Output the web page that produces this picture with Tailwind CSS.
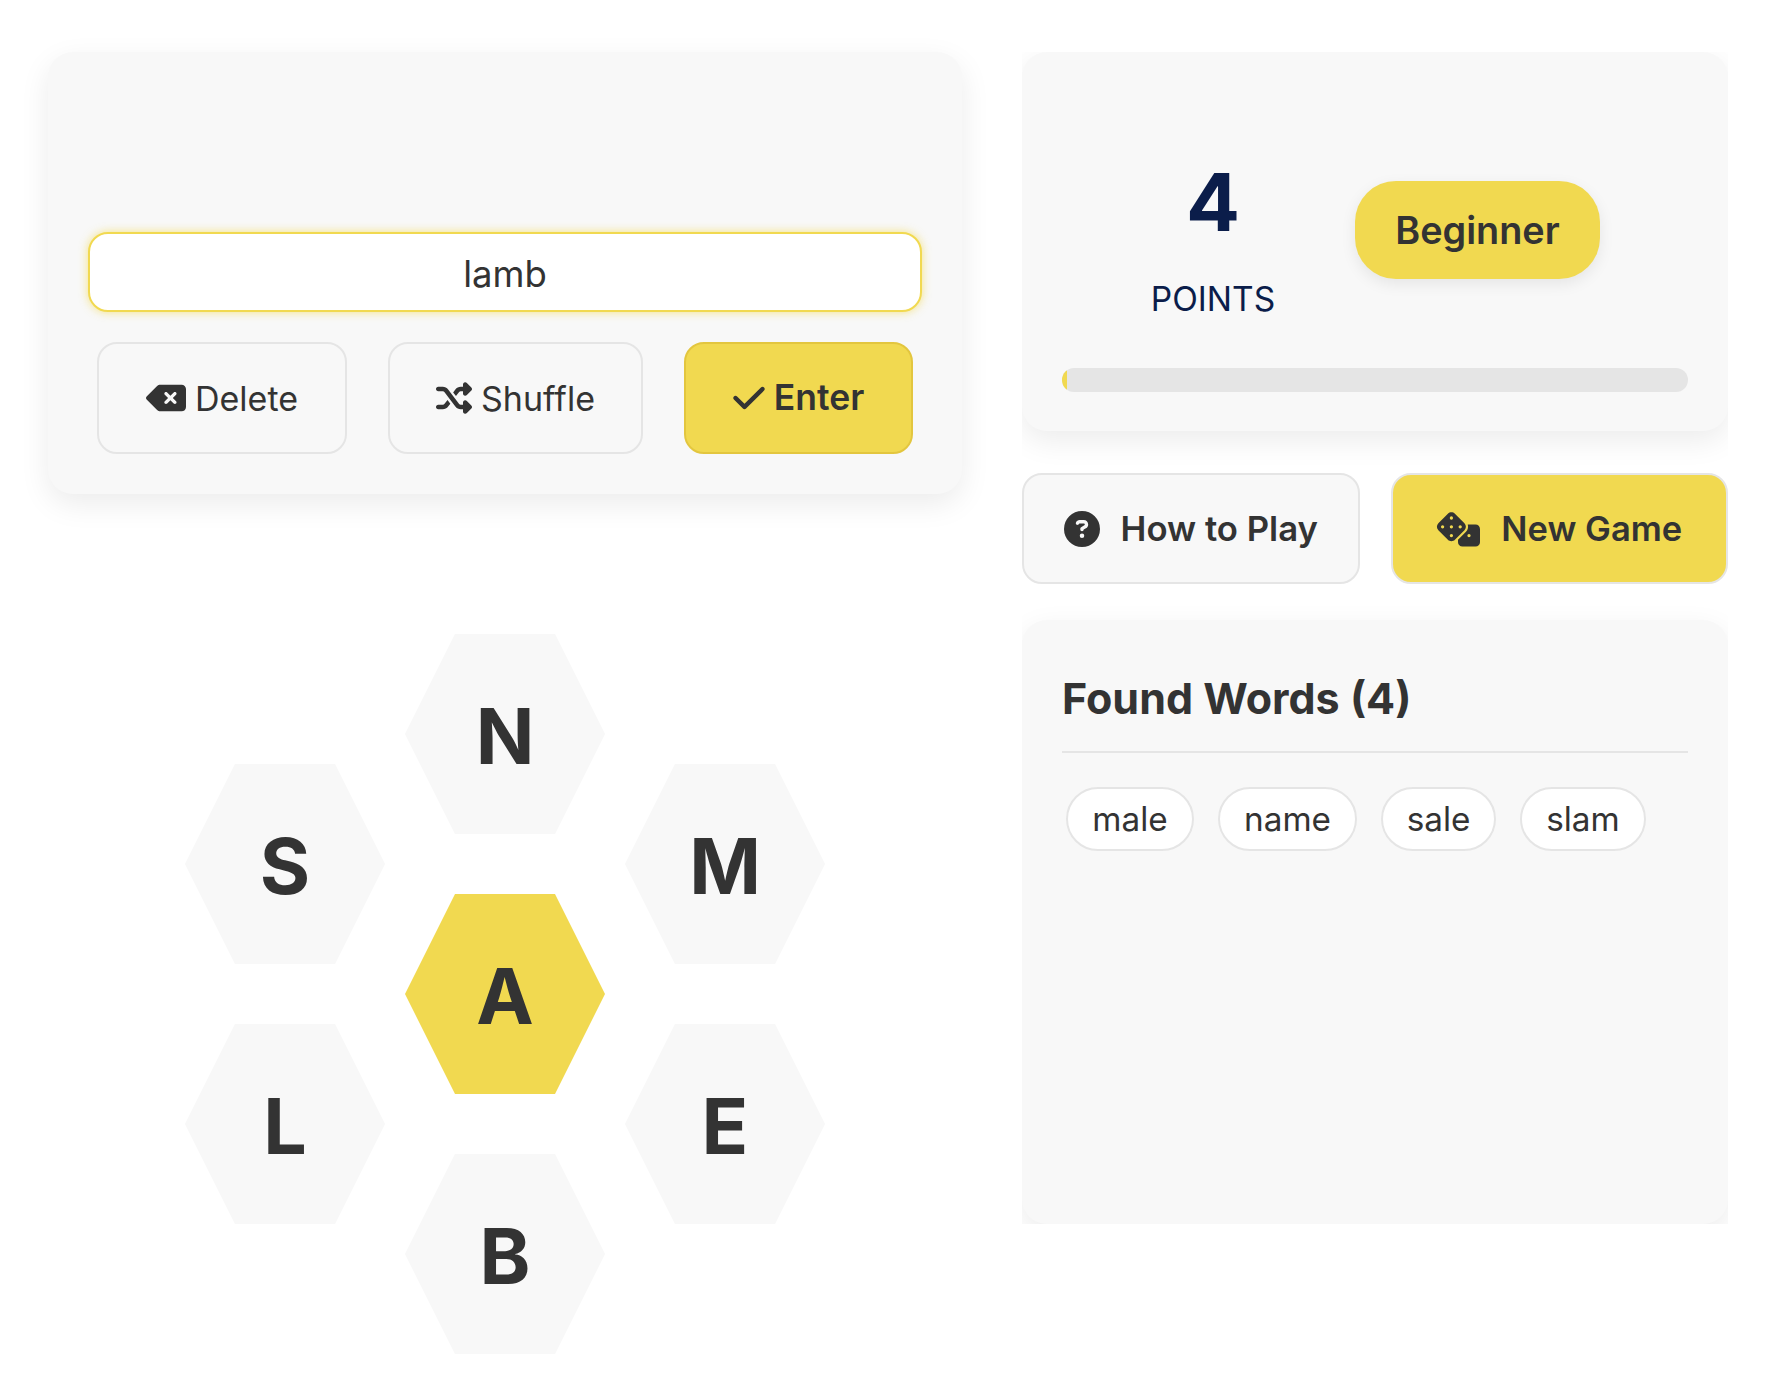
<!DOCTYPE html>
<html>
<head>
<meta charset="utf-8">
<script src="https://cdn.jsdelivr.net/npm/@tailwindcss/browser@4"></script>
</head>
<body class="bg-white font-['Inter',sans-serif] text-[#333333]">
<main class="flex items-start gap-[60px] px-[48px] pt-[52px] h-[1382px] overflow-hidden">
  <section class="w-[914px] shrink-0 flex flex-col">
    <div class="bg-[#f8f8f8] rounded-[25px] shadow-[0_10px_30px_rgba(0,0,0,0.08)] px-[40px] pb-[40px] pt-[180px] flex flex-col gap-[30px]">
      <div class="h-[80px] bg-white border-2 border-[#f1d950] rounded-[20px] shadow-[0_0_10px_rgba(242,217,78,0.7)] flex items-center justify-center text-[36.5px] leading-none pt-[4px]">lamb</div>
      <div class="flex justify-center gap-[41px]">
        <button class="h-[112px] w-[250px] flex items-center justify-center gap-[9px] border-2 border-[#e5e5e5] rounded-[20px] bg-[#f8f8f8] text-[34px]">
          <svg class="w-[40px] h-[36px] fill-[#333333]" viewBox="0 0 576 512"><path d="M576 128c0-35.3-28.7-64-64-64H205.3c-17 0-33.3 6.7-45.3 18.7L9.4 233.4c-6 6-9.4 14.1-9.4 22.6s3.4 16.6 9.4 22.6L160 429.3c12 12 28.3 18.7 45.3 18.7H512c35.3 0 64-28.7 64-64V128zM271 175c9.4-9.4 24.6-9.4 33.9 0l47 47 47-47c9.4-9.4 24.6-9.4 33.9 0s9.4 24.6 0 33.9l-47 47 47 47c9.4 9.4 9.4 24.6 0 33.9s-24.6 9.4-33.9 0l-47-47-47 47c-9.4 9.4-24.6 9.4-33.9 0s-9.4-24.6 0-33.9l47-47-47-47c-9.4-9.4-9.4-24.6 0-33.9z"/></svg>
          <span>Delete</span>
        </button>
        <button class="h-[112px] w-[255px] flex items-center justify-center gap-[9px] border-2 border-[#e5e5e5] rounded-[20px] bg-[#f8f8f8] text-[34px]">
          <svg class="w-[36px] h-[36px] fill-[#333333]" viewBox="0 0 512 512"><path d="M403.8 34.4c12-5 25.7-2.2 34.9 6.9l64 64c6 6 9.4 14.1 9.4 22.6s-3.4 16.6-9.4 22.6l-64 64c-9.2 9.2-22.9 11.9-34.9 6.9s-19.8-16.6-19.8-29.6V160H352c-10.1 0-19.6 4.7-25.6 12.8L284 229.3 244 176l31.2-41.6C293.3 110.2 321.8 96 352 96h32V64c0-12.9 7.8-24.6 19.8-29.6zM164 282.7L204 336l-31.2 41.6C154.7 401.8 126.2 416 96 416H32c-17.7 0-32-14.3-32-32s14.3-32 32-32H96c10.1 0 19.6-4.7 25.6-12.8L164 282.7zm274.6 188c-9.2 9.2-22.9 11.9-34.9 6.9s-19.8-16.6-19.8-29.6V416H352c-30.2 0-58.7-14.2-76.8-38.4L121.6 172.8c-6-8.1-15.5-12.8-25.6-12.8H32c-17.7 0-32-14.3-32-32s14.3-32 32-32H96c30.2 0 58.7 14.2 76.8 38.4L326.4 339.2c6 8.1 15.5 12.8 25.6 12.8h32V320c0-12.9 7.8-24.6 19.8-29.6s25.7-2.2 34.9 6.9l64 64c6 6 9.4 14.1 9.4 22.6s-3.4 16.6-9.4 22.6l-64 64z"/></svg>
          <span>Shuffle</span>
        </button>
        <button class="h-[112px] w-[229px] flex items-center justify-center gap-[9px] border-2 border-[#e3c63f] rounded-[20px] bg-[#f1d950] text-[35.5px] font-semibold">
          <svg class="w-[32px] h-[36px] fill-[#333333]" viewBox="0 0 448 512"><path d="M438.6 105.4c12.5 12.5 12.5 32.8 0 45.3l-256 256c-12.5 12.5-32.8 12.5-45.3 0l-128-128c-12.5-12.5-12.5-32.8 0-45.3s32.8-12.5 45.3 0L160 338.7 393.4 105.4c12.5-12.5 32.8-12.5 45.3 0z"/></svg>
          <span>Enter</span>
        </button>
      </div>
    </div>
    <div class="mt-[140px] flex justify-center gap-[20px] text-[77px] font-bold leading-none">
      <div class="flex flex-col justify-center gap-[60px]">
        <div class="w-[200px] h-[200px] pt-[4px] bg-[#f8f8f8] flex items-center justify-center [clip-path:polygon(25%_0,75%_0,100%_50%,75%_100%,25%_100%,0_50%)]">S</div>
        <div class="w-[200px] h-[200px] pt-[4px] bg-[#f8f8f8] flex items-center justify-center [clip-path:polygon(25%_0,75%_0,100%_50%,75%_100%,25%_100%,0_50%)]">L</div>
      </div>
      <div class="flex flex-col justify-center gap-[60px]">
        <div class="w-[200px] h-[200px] pt-[4px] bg-[#f8f8f8] flex items-center justify-center [clip-path:polygon(25%_0,75%_0,100%_50%,75%_100%,25%_100%,0_50%)]">N</div>
        <div class="w-[200px] h-[200px] pt-[4px] bg-[#f1d950] flex items-center justify-center [clip-path:polygon(25%_0,75%_0,100%_50%,75%_100%,25%_100%,0_50%)]">A</div>
        <div class="w-[200px] h-[200px] pt-[4px] bg-[#f8f8f8] flex items-center justify-center [clip-path:polygon(25%_0,75%_0,100%_50%,75%_100%,25%_100%,0_50%)]">B</div>
      </div>
      <div class="flex flex-col justify-center gap-[60px]">
        <div class="w-[200px] h-[200px] pt-[4px] bg-[#f8f8f8] flex items-center justify-center [clip-path:polygon(25%_0,75%_0,100%_50%,75%_100%,25%_100%,0_50%)]">M</div>
        <div class="w-[200px] h-[200px] pt-[4px] bg-[#f8f8f8] flex items-center justify-center [clip-path:polygon(25%_0,75%_0,100%_50%,75%_100%,25%_100%,0_50%)]">E</div>
      </div>
    </div>
  </section>
  <aside class="w-[706px] shrink-0 h-[1172px] overflow-hidden flex flex-col">
    <div class="h-[379px] shrink-0 bg-[#f8f8f8] rounded-[25px] shadow-[0_10px_30px_rgba(0,0,0,0.08)] px-[40px] pt-[100px]">
      <div class="flex items-start">
        <div class="w-[293px] pl-[9px] flex flex-col items-center text-[#0b1d4a]">
          <div class="text-[80px] font-bold leading-none h-[80px] mt-[10px]">4</div>
          <div class="text-[33.5px] leading-none mt-[41px]">POINTS</div>
        </div>
        <div class="mt-[29px] h-[98px] w-[245px] rounded-[41px] bg-[#f1d950] shadow-[0_5px_15px_rgba(0,0,0,0.08)] flex items-center justify-center text-[37.8px] font-semibold">Beginner</div>
      </div>
      <div class="h-[24px] rounded-full bg-[#e5e5e5] overflow-hidden mt-[51px]">
        <div class="h-full w-[5px] bg-[#f1d950]"></div>
      </div>
    </div>
    <div class="flex gap-[31px] mt-[42px] shrink-0">
      <button class="flex-1 h-[111px] flex items-center justify-center gap-[21px] border-2 border-[#e5e5e5] rounded-[20px] bg-[#f8f8f8] text-[34.7px] font-semibold">
        <svg class="w-[36px] h-[36px] fill-[#333333]" viewBox="0 0 512 512"><path d="M256 512A256 256 0 1 0 256 0a256 256 0 1 0 0 512zM169.8 165.3c7.9-22.3 29.1-37.3 52.8-37.3h58.3c34.9 0 63.1 28.3 63.1 63.1c0 22.6-12.1 43.5-31.7 54.8L280 264.4c-.2 13-10.9 23.6-24 23.6c-13.3 0-24-10.7-24-24V250.5c0-8.6 4.6-16.5 12.1-20.8l44.3-25.4c4.7-2.7 7.6-7.7 7.6-13.1c0-8.4-6.8-15.1-15.1-15.1H222.6c-3.4 0-6.4 2.1-7.5 5.3l-.4 1.2c-4.4 12.5-18.2 19-30.6 14.6s-19-18.2-14.6-30.6l.4-1.2zM224 352a32 32 0 1 1 64 0 32 32 0 1 1 -64 0z"/></svg>
        <span>How to Play</span>
      </button>
      <button class="flex-1 h-[111px] flex items-center justify-center gap-[21px] border-2 border-[#e5e5e5] rounded-[20px] bg-[#f1d950] text-[34.5px] font-semibold">
        <svg class="w-[44px] h-[36px] fill-[#333333]" viewBox="0 0 640 512"><path d="M274.9 34.3c-28.1-28.1-73.7-28.1-101.8 0L34.3 173.1c-28.1 28.1-28.1 73.7 0 101.8L173.1 413.7c28.1 28.1 73.7 28.1 101.8 0L413.7 274.9c28.1-28.1 28.1-73.7 0-101.8L274.9 34.3zM200 224a24 24 0 1 1 48 0 24 24 0 1 1 -48 0zM96 200a24 24 0 1 1 0 48 24 24 0 1 1 0-48zM224 376a24 24 0 1 1 0-48 24 24 0 1 1 0 48zM352 200a24 24 0 1 1 0 48 24 24 0 1 1 0-48zM224 120a24 24 0 1 1 0-48 24 24 0 1 1 0 48zm96 328c0 35.3 28.7 64 64 64H576c35.3 0 64-28.7 64-64V256c0-35.3-28.7-64-64-64H461.7c11.6 36 3.1 77-25.4 105.5L320 413.8V448zM480 328a24 24 0 1 1 0 48 24 24 0 1 1 0-48z"/></svg>
        <span>New Game</span>
      </button>
    </div>
    <div class="mt-[36px] h-[604px] shrink-0 bg-[#f8f8f8] rounded-[25px] shadow-[0_10px_30px_rgba(0,0,0,0.08)] px-[40px] pt-[57px]">
      <h2 class="text-[43px] font-bold leading-none pb-[31px] border-b-2 border-[#e5e5e5]">Found Words (4)</h2>
      <div class="flex gap-[24px] mt-[34px] px-[4px] text-[33.3px]">
        <span class="h-[64px] w-[128px] pt-[1px] rounded-full border-2 border-[#e5e5e5] bg-white flex items-center justify-center">male</span>
        <span class="h-[64px] w-[139px] pt-[1px] rounded-full border-2 border-[#e5e5e5] bg-white flex items-center justify-center">name</span>
        <span class="h-[64px] w-[115px] pt-[1px] rounded-full border-2 border-[#e5e5e5] bg-white flex items-center justify-center">sale</span>
        <span class="h-[64px] w-[126px] pt-[1px] rounded-full border-2 border-[#e5e5e5] bg-white flex items-center justify-center">slam</span>
      </div>
    </div>
  </aside>
</main>
</body>
</html>
